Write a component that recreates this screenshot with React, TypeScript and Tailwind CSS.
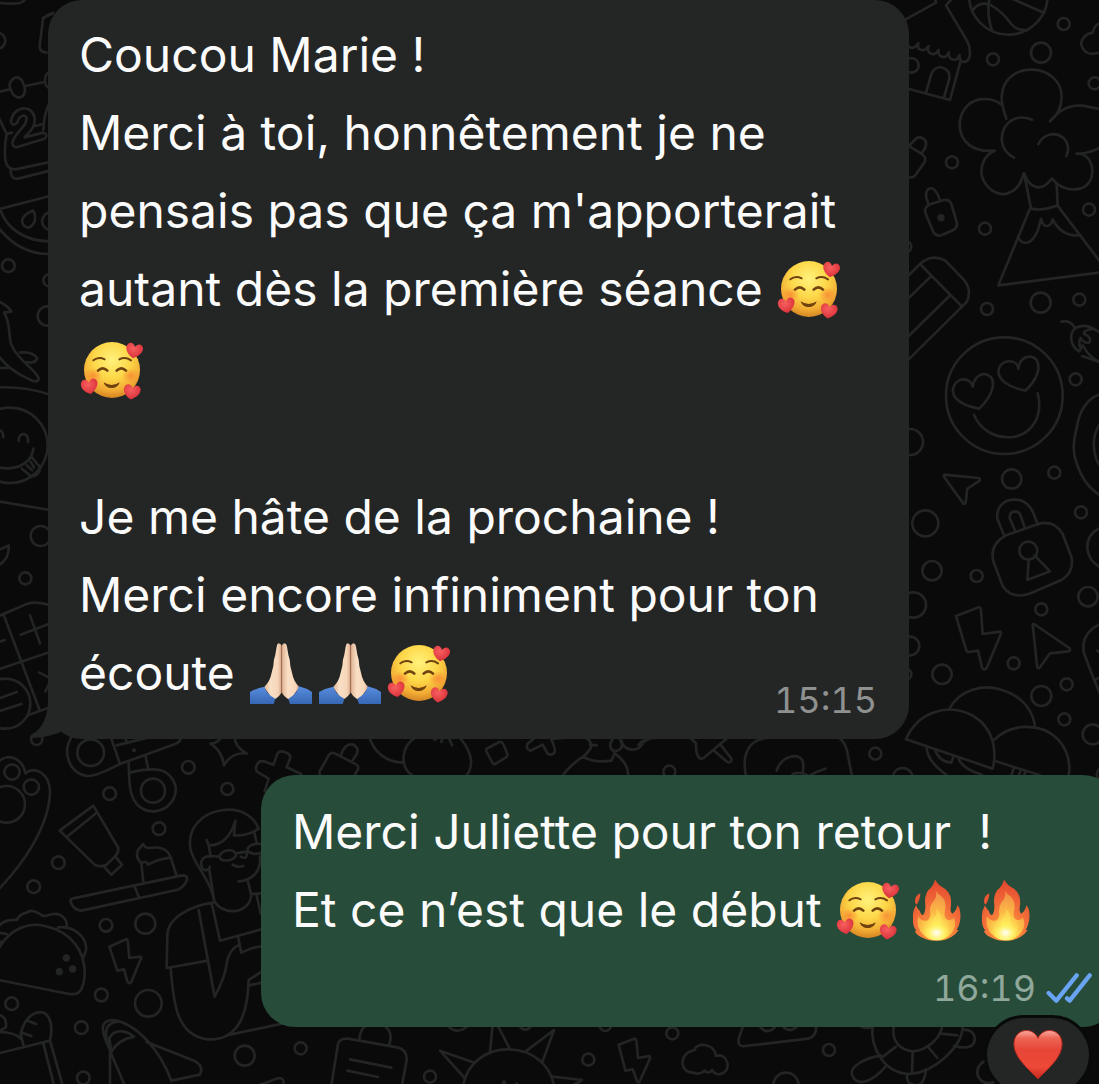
import type { ReactNode } from 'react';

type Circle = [number, number, number];

function Doodle({ at, paths, circles = [], dots = [] }: { at: string; paths: string[]; circles?: Circle[]; dots?: Circle[] }) {
  return (
    <g transform={at}>
      {paths.map((d, i) => (
        <path key={i} d={d} />
      ))}
      {circles.map(([cx, cy, r], i) => (
        <circle key={i} cx={cx} cy={cy} r={r} />
      ))}
      {dots.map(([cx, cy, r], i) => (
        <circle key={i} cx={cx} cy={cy} r={r} fill="#232424" stroke="none" />
      ))}
    </g>
  );
}

function Wallpaper() {
  return (
    <svg
      className="pointer-events-none absolute left-0 top-0"
      width="1099"
      height="1084"
      viewBox="0 0 1099 1084"
      fill="none"
      stroke="#232424"
      strokeWidth="8"
      strokeLinecap="round"
      strokeLinejoin="round"
      aria-hidden="true"
    >
      {/* shop, ball, tree, mountain, pencil, chilli */}
      <Doodle
        at="translate(900 0) scale(.33333)"
        paths={[
          'M10 62 L108 8 L104 -6',
          'M158 -6 L138 16 L202 124 Q212 142 209 168 Q205 188 188 185 Q176 182 179 165 Q170 186 152 176 Q144 170 147 157 Q138 178 121 168 Q113 162 116 150 Q104 170 88 158 Q82 152 86 138 Q72 158 56 146 Q52 140 55 130 Q40 152 24 138',
          'M24 266 L150 300 L181 186',
          'M78 278 L94 222 Q104 200 124 202 Q152 210 148 236 L132 293',
          'M216 34 Q238 0 274 16 Q306 34 334 72 Q352 94 384 90',
          'M268 -6 Q260 50 276 90',
          'M335 -4 L432 38',
          'M600 70 Q584 74 578 98 Q546 104 543 132 Q550 160 576 162 L600 158',
          'M319 356 C310 330 304 312 305 290 C308 240 345 208 396 209 C446 210 486 244 485 292 C484 324 474 346 450 364 C480 326 516 314 548 317 L604 328',
          'M305 314 C284 298 262 295 238 298 C200 306 178 340 179 378 C182 424 216 458 284 452 C250 466 240 502 246 530 C258 566 288 584 316 582 C350 574 362 552 372 519 C382 548 398 562 418 562 C436 560 446 548 456 535 C476 562 508 574 540 566 C572 556 580 528 576 502 C570 474 552 460 530 461 C560 462 582 454 604 440',
          'M396 359 C360 344 328 356 312 386 C298 420 306 454 342 473',
          'M415 432 C430 402 464 394 488 412 C506 428 508 450 499 468',
          'M372 519 L393 626 Q430 634 473 616 L470 552',
          'M389 628 L295 856 L604 817',
          'M475 620 L604 790',
          'M354 710 C364 736 390 734 406 706 C418 688 418 670 423 657 Q428 678 440 678 Q454 678 458 658 C474 690 500 710 542 706',
          'M26 438 L50 414 Q66 408 76 422 Q84 436 66 458 M30 440 L68 464 Q80 474 74 486 L46 526 Q38 534 26 532',
          'M84 608 Q70 572 90 565 Q108 562 120 602',
          'M92 612 L132 600 Q148 598 154 612 L170 666 Q174 682 160 690 L124 706 Q108 710 100 696 L76 638 Q72 620 92 612 Z',
          'M20 832 L60 792 Q96 760 136 782 L194 842 Q216 872 200 906 L186 920 L20 1084',
          'M60 792 L186 920 M92 830 L20 900 M148 888 L20 1014',
          'M484 965 Q508 958 526 984 Q508 1000 516 1028 Q524 1048 538 1054 L548 1036 Q570 1076 604 1088',
          'M526 984 Q556 970 580 986 L600 998 M580 986 Q550 990 552 1002 Q576 1010 568 1028 Q550 1030 542 1014 Q534 1028 542 1044',
        ]}
        circles={[[325, -14, 118], [491, 72, 18], [279, 178, 18], [423, 158, 30], [34, 196, 22], [584, 250, 18], [156, 487, 18], [255, 686, 18], [567, 629, 18], [422, 908, 30], [538, 899, 18], [261, 927, 18], [18, 740, 16]]}
        dots={[[123, 653, 11]]}
      />
      {/* heart-eyed face, padlock, bolts, arrows, umbrellas */}
      <Doodle
        at="translate(900 360) scale(.33333)"
        paths={[
          'M238 146 C190 138 154 116 159 86 C168 48 214 52 218 80 C224 44 252 34 272 50 C292 76 266 118 238 146 Z',
          'M376 92 C328 82 290 60 296 28 C306 -6 352 -2 355 26 C360 -10 392 -20 410 0 C428 34 396 74 376 92 Z',
          'M222 165 C242 212 288 236 338 231 C398 222 430 166 413 100',
          'M132 344 L236 354 Q244 358 236 364 L202 386 L197 428 Q194 436 188 428 L132 350 Z',
          'M313 528 L292 476 C288 440 312 420 340 419 C374 416 392 438 402 464 L414 494',
          'M346 514 L329 474 Q328 456 344 454 Q358 454 362 468 L374 502',
          'M318 526 L414 492 Q462 478 488 522 L514 590 Q524 636 484 660 L392 700 Q336 720 308 678 L280 604 Q268 552 318 526 Z',
          'M386 600 L382 660 L450 634 L404 586',
          'M168 768 L236 742 Q242 740 243 752 L248 822 L300 815 Q306 816 300 828 L260 924 Q250 934 246 922 L234 872 L206 876 Q200 878 198 868 Z',
          'M398 793 L402 792 L508 864 Q514 872 504 874 L450 880 L420 922 Q412 930 411 916 Z',
          'M604 102 C560 112 536 160 531 200 C518 250 518 280 530 310 C546 360 576 392 604 408',
          'M604 186 Q578 220 582 262 Q586 306 604 320',
          'M604 502 Q560 520 562 566 Q566 604 604 624',
          'M604 790 Q540 820 552 880 L580 954 L604 1010 M592 872 L604 878 M584 960 L604 950',
          'M150 1043 C180 990 250 970 306 990 C372 1010 402 1058 405 1104',
          'M546 -12 L604 8',
        ]}
        circles={[[313, 107, 175], [527, 58, 18], [30, 246, 39], [335, 357, 29], [463, 338, 18], [76, 490, 39], [543, 457, 18], [96, 632, 29], [230, 648, 18], [40, 735, 38], [424, 748, 18], [564, 710, 29], [385, 572, 27], [30, 858, 28], [126, 943, 29], [341, 910, 18], [424, 1008, 30], [500, 973, 18], [493, 1078, 18], [578, 1123, 30], [18, 943, 16]]}
      />
      {/* calendar, melon, dolphin */}
      <Doodle
        at="translate(0 0) scale(.33333)"
        paths={[
          'M-4 8 Q40 14 62 8 Q74 4 76 -6',
          'M160 38 Q128 48 128 66 L119 138 Q118 156 140 158 M128 54 L160 40',
          'M-4 276 L28 268 M76 258 L134 246',
          'M36 240 C46 226 62 232 68 246 C78 266 78 280 66 290 C48 298 36 282 32 268 C26 256 28 248 36 240 Z',
          'M150 214 Q128 226 138 256 L150 268',
          'M-4 352 L20 402 Q12 440 16 480 Q20 508 46 508 L150 486 M32 506 Q30 540 54 536 L150 512',
          'M20 402 L36 398 M106 378 L128 372',
          'M33 368 C34 320 94 310 103 350 C110 384 82 400 74 412 L130 398 Q146 404 134 416 L50 442 Q34 440 38 424 C50 392 82 378 80 354 C74 340 56 348 52 368 Q40 380 33 368 Z',
          'M148 310 Q132 340 130 390',
          'M-4 628 L150 588 M0 626 C20 690 80 724 150 724 M-4 684 Q60 764 150 762',
          'M66 662 Q68 644 98 632 Q108 640 104 664 Q92 690 76 680 Q68 676 66 662 Z',
          'M150 636 Q130 640 126 664 Q128 684 150 690',
          'M-4 904 Q22 916 34 934 L12 938 C34 970 24 1010 34 1034 C50 1078 106 1108 116 1134 Q114 1154 84 1136 Q24 1108 -4 1068',
          'M60 1058 Q100 1054 112 1076 Q104 1092 80 1086 M-4 1104 L28 1104 M-4 1162 Q80 1160 150 1184',
        ]}
        circles={[[-8, 122, 24], [25, 797, 19], [148, 841, 18], [142, 948, 29]]}
      />
      {/* laughing face, keypad */}
      <Doodle
        at="translate(0 400) scale(.33333)"
        paths={[
          'M-4 202 C50 214 96 188 100 146',
          'M56 122 Q56 102 72 102 Q86 106 84 126 M-4 90 Q10 92 10 112',
          'M66 206 L92 228 Q108 232 118 214 Q124 200 112 192 L94 170 M80 196 L96 210 M92 186 L102 202',
          'M-4 304 L150 330',
          'M-4 450 Q18 440 26 436 C28 464 16 484 -4 496',
          'M-4 648 L80 612 Q110 602 150 616 M10 642 L118 928 M-4 808 L150 756',
          'M90 646 L120 730 M62 704 L146 672 M-4 726 L14 720 M118 818 L150 834 M136 874 L150 846',
          'M-4 896 L50 876 M-4 934 L64 912 M84 946 L150 922',
        ]}
        circles={[[30, 136, 113], [122, 408, 30], [76, 535, 18], [16, 911, 75], [110, 1018, 17]]}
      />
      {/* whistle, tube, cake, taco, person, plane */}
      <Doodle
        at="translate(0 730) scale(.33333)"
        paths={[
          'M-4 96 C18 70 66 78 76 130 C104 108 148 128 150 184 C148 290 70 400 -4 478',
          'M215 20 C186 66 206 130 262 138 C290 140 330 116 360 102 L332 20 M350 46 L470 16 M360 102 L526 42 Q544 34 542 20 M374 20 L380 36',
          'M386 100 L388 150 C390 210 416 246 464 244 C510 240 532 200 526 166 C510 116 470 108 388 128 M436 76 L444 114',
          'M632 42 Q660 36 666 16 M632 40 Q668 66 672 106 Q694 66 740 70 Q702 50 704 16',
          'M794 184 L806 146 L776 128 Q764 122 770 106 Q776 90 792 94 L820 104 L832 72 Q838 60 854 66 Q874 72 870 86 L860 112 L904 132',
          'M179 302 L280 227 L355 354 Q356 370 342 382 L320 404 Q302 412 286 406 Z M204 318 L290 248 M314 412 L334 434 L366 404 L348 382',
          'M430 456 L424 400 Q404 380 414 360 L430 342 Q432 354 450 354 Q500 346 512 382 L530 438 M424 400 Q440 390 444 404 Q460 396 476 390 L512 382',
          'M216 506 L546 436 Q568 436 558 456 Q548 474 530 480 L244 542 Q220 540 212 516 Q210 508 216 506 Z M404 470 L416 500',
          'M-4 590 Q10 568 50 570 Q60 552 80 548 Q94 536 116 550 Q130 562 144 556 Q170 546 186 558 Q202 570 200 588',
          'M-4 656 C30 594 90 576 134 588 C220 606 256 670 254 734 C250 782 238 796 208 792 L-4 750 M174 592 C230 586 262 630 258 660 Q256 670 250 682 M-4 608 L20 612 M-4 636 L6 636',
          'M328 650 L378 628 Q384 626 384 640 L388 684 L420 680 Q428 682 420 692 L394 756 Q388 764 382 754 L372 718 L352 722 Z',
          'M776 296 C760 256 720 234 670 240 C600 248 560 300 572 360 C582 404 626 440 640 500',
          'M776 296 Q740 320 702 316 L706 272 C696 310 670 348 626 346 L620 330 M626 346 L632 378 L656 380 M762 304 L770 338',
          'M632 380 C610 374 598 396 606 412 C612 424 624 424 630 410 M628 420 L642 510 C660 554 744 560 754 496 L744 454',
          'M658 380 C666 354 710 356 708 376 C700 396 662 396 658 380 Z M708 370 L744 364 M784 342 C750 338 736 356 746 366 Q764 376 784 368',
          'M780 380 C784 430 750 452 716 454 M698 404 Q712 414 730 408 M722 380 Q742 390 740 370',
          'M640 518 C580 526 500 560 502 620 L500 714 L624 692 M596 540 L644 800 Q676 740 680 700 Q686 660 714 646 M636 524 L660 632 L784 598 M714 620 L724 668 Q760 650 784 650 M754 492 L784 490 M770 496 L782 550',
          'M512 714 C520 820 530 918 624 928 C720 934 744 840 746 750 L784 726 M748 766 L784 758 M690 914 L850 880',
          'M330 1066 L330 960 C300 900 300 870 340 870 C410 880 480 960 514 1052 L600 1034 Q612 1010 586 994 L440 936 M374 1066 L334 972 Q310 914 322 892 Q332 876 352 876 M334 966 L328 924 C346 892 384 904 402 920 Q352 930 334 966 Z',
          'M-4 970 L150 932 L188 1066 M130 940 L162 1066 M150 932 C164 870 140 840 110 848 C80 856 66 892 62 912 L70 944 M84 872 L108 882 M66 908 L94 918 M-4 906 Q44 906 62 926 M0 856 Q20 860 18 892 L4 900',
        ]}
        circles={[[36, 126, 23], [94, 171, 23], [20, 223, 55], [272, 68, 40], [459, 182, 36], [565, 112, 19], [329, 191, 19], [682, 177, 18], [477, 296, 19], [175, 398, 19], [101, 470, 19], [318, 586, 19], [436, 581, 30], [304, 795, 19], [445, 820, 40], [35, 821, 19], [244, 893, 19], [734, 977, 30], [250, 1044, 19]]}
        dots={[[199, 684, 11], [178, 725, 11], [218, 717, 11], [402, 61, 6]]}
      />
      {/* strip between the two bubbles */}
      <Doodle
        at="translate(260 730) scale(.33333)"
        paths={[
          'M180 136 L178 126 L206 76 Q214 64 228 72 L290 104 Q300 112 290 124 L284 136 M244 72 Q256 38 280 44 Q300 56 288 76 L276 94',
          'M328 20 C340 66 380 98 430 98 M470 20 C420 50 420 110 456 136 M600 24 C640 70 640 110 620 136',
          'M518 24 L526 30 M544 36 L548 24 M576 46 L568 26',
          'M684 54 L718 36 Q726 34 730 42 L742 72 Q744 78 738 82 L706 102 Q700 104 696 96 L678 62 Q678 56 684 54 Z',
          'M828 20 L802 42 Q796 58 812 62 L848 44 L862 70 Q876 80 884 66 Q888 58 872 24 M880 26 L910 24',
          'M972 20 Q1000 36 992 54 Q982 70 970 80 Q940 96 908 136 M990 44 L1010 46 M970 80 Q1000 100 1054 92 L1064 70 Q1106 100 1104 136 M1060 24 Q1040 50 1062 64 Q1090 62 1086 34 M1078 20 C1090 72 1140 66 1150 36 L1170 24',
        ]}
      />
      <Doodle
        at="translate(640 700) scale(.33333)"
        paths={[
          'M-4 134 Q16 112 46 114 M148 112 L168 130 Q166 160 178 174 Q188 180 198 168 L262 114 M220 150 L262 186 Q276 190 274 176 L240 132',
          'M318 228 C306 170 320 120 380 114 M596 112 Q620 130 624 168 L636 228 M410 212 C424 166 480 156 488 184 Q492 196 488 220 M458 222 Q480 214 500 224 M510 226 Q530 214 556 206',
          'M798 118 L1058 206 C1072 150 1060 84 1000 48 C920 4 830 40 798 118 Z',
          'M1060 122 C1110 70 1200 66 1252 116 C1284 150 1292 190 1286 228 M1068 184 L1200 226 M1114 226 L1120 208 M1136 226 L1142 212 M1152 228 L1156 216',
          'M860 142 Q860 184 924 228 M886 150 Q898 186 934 188 L940 170 M956 176 Q966 206 1026 224',
        ]}
        circles={[[706, 161, 18], [88, 215, 18], [788, 234, 30], [1392, 224, 22]]}
      />
      {/* tag, sun, bolt */}
      <Doodle
        at="translate(260 1000) scale(.33333)"
        paths={[
          'M214 256 L234 132 Q240 114 264 116 L412 142 Q442 150 440 180 L426 256 M298 118 Q300 90 316 78 M374 78 Q400 96 388 132',
          'M270 178 L394 203 M262 212 L354 231',
          'M610 256 C620 190 680 146 748 148 C820 150 870 196 882 256 M614 234 L540 152 L644 188 M690 156 L698 74 M714 78 L748 144 M800 152 L882 90 L848 184 M878 230 L966 240 L940 256',
          'M1076 134 L1122 116 Q1130 116 1130 130 L1134 174 L1168 168 Q1172 170 1168 180 L1138 246 Q1132 250 1130 240 L1118 208 L1096 212 Z',
          'M-4 256 L56 234 Q74 234 70 256',
          'M562 76 Q592 108 624 76',
        ]}
        circles={[[122, 145, 18], [510, 230, 18], [985, 179, 18], [1237, 100, 18], [796, 72, 17], [1036, 76, 17]]}
        dots={[[732, 248, 7], [770, 252, 5]]}
      />
      {/* clouds, turtle */}
      <Doodle
        at="translate(680 950) scale(.33333)"
        paths={[
          'M40 368 C0 370 -8 310 44 300 C46 278 102 276 108 318 C144 306 158 364 122 372 Q106 376 96 360 Q86 374 74 362 Q58 376 40 368 Z',
          'M190 226 L176 266 Q172 292 196 288 L384 266 Q412 258 408 226 M240 230 Q262 256 284 232 M310 230 Q328 250 350 230',
          'M578 226 C570 290 610 370 690 372 C760 368 850 290 848 226 M544 230 L560 234 L578 232',
          'M642 226 C632 270 660 302 700 304 C740 302 786 262 786 226 M606 322 L648 290 M698 308 L696 370 M742 288 L772 324 M778 250 L832 256',
          'M602 316 C550 326 510 350 516 374 C530 410 572 402 620 346 M682 372 Q676 404 708 406 Q734 404 738 358 M850 240 C880 236 894 266 876 286 Q860 298 822 288',
        ]}
        circles={[[447, 300, 18], [318, 406, 38], [926, 366, 34]]}
      />
    </svg>
  );
}

const heart = 'M0 23 C-14 17 -28 4 -25 -11 C-21 -26 -5 -25 0 -11 C6 -25 22 -24 25 -10 C26 5 11 17 0 23 Z';

function LoveFace() {
  return (
    <svg className="h-[63px] w-[69px] shrink-0" viewBox="24 20 207 189" role="img" aria-label="🥰">
      <defs>
        <radialGradient id="face" cx="50%" cy="32%" r="66%">
          <stop offset="0" stopColor="#fff27c" />
          <stop offset=".5" stopColor="#fdd748" />
          <stop offset=".82" stopColor="#f3ad35" />
          <stop offset="1" stopColor="#d98b25" />
        </radialGradient>
        <radialGradient id="blush">
          <stop offset="0" stopColor="#f98233" stopOpacity=".75" />
          <stop offset="1" stopColor="#f98233" stopOpacity="0" />
        </radialGradient>
        <radialGradient id="love" cx="42%" cy="35%" r="65%">
          <stop offset="0" stopColor="#f85f5f" />
          <stop offset="1" stopColor="#d9313a" />
        </radialGradient>
      </defs>
      <circle cx="123" cy="113" r="84" fill="url(#face)" />
      <ellipse cx="67" cy="130" rx="27" ry="22" fill="url(#blush)" />
      <ellipse cx="179" cy="130" rx="27" ry="22" fill="url(#blush)" />
      <g fill="none" stroke="#70420f" strokeLinecap="round">
        <path strokeWidth="6" d="M67 84 Q82 72 101 81 M145 81 Q163 72 180 84" />
        <path strokeWidth="8" d="M81 115 Q95 101 109 115 M137 115 Q151 101 165 115" />
      </g>
      <path d="M98 150 Q122 166 146 150 C141 173 103 173 98 150 Z" fill="#70420f" />
      <path d={heart} transform="translate(190 55) rotate(10)" fill="url(#love)" />
      <path d={heart} transform="translate(56 162) rotate(-10)" fill="url(#love)" />
      <path d={heart} transform="translate(183 179) rotate(8)" fill="url(#love)" />
    </svg>
  );
}

function PrayingHands() {
  return (
    <svg className="h-[63px] w-[69px] shrink-0" viewBox="30 32 207 189" role="img" aria-label="🙏🏻">
      <defs>
        <linearGradient id="sleeve" x1="0" x2="0" y1="0" y2="1">
          <stop offset="0" stopColor="#5b8ddf" />
          <stop offset="1" stopColor="#3567b4" />
        </linearGradient>
        <linearGradient id="skin" x1="0" x2="1">
          <stop offset="0" stopColor="#dfb192" />
          <stop offset=".35" stopColor="#fae0c6" />
          <stop offset=".8" stopColor="#f6d5b8" />
          <stop offset="1" stopColor="#d6a183" />
        </linearGradient>
      </defs>
      <path d="M131 44 Q128 36 122 36 Q117 37 116 46 L112 70 Q106 86 106 104 L100 128 Q97 148 78 168 L106 206 Q126 196 131 182 Z" fill="url(#skin)" />
      <path d="M131 44 Q134 36 140 36 Q146 37 147 46 L151 70 Q157 86 157 104 L163 128 Q166 148 184 168 L156 206 Q136 196 131 182 Z" fill="url(#skin)" />
      <path d="M36 218 L36 182 Q56 170 80 166 Q84 188 112 202 L107 218 Z M222 218 L222 182 Q204 170 182 165 Q178 188 151 202 L156 218 Z" fill="url(#sleeve)" />
      <path d="M131 42 L131 184" stroke="#a06d50" strokeWidth="3" />
    </svg>
  );
}

function Fire() {
  return (
    <svg className="h-[63px] w-[69px] shrink-0" viewBox="243 37 207 189" role="img" aria-label="🔥">
      <defs>
        <radialGradient id="flame" cx="50%" cy="88%" r="85%">
          <stop offset="0" stopColor="#fbb13c" />
          <stop offset=".5" stopColor="#f5733a" />
          <stop offset="1" stopColor="#e2472e" />
        </radialGradient>
        <radialGradient id="ember" cx="50%" cy="88%" r="90%">
          <stop offset="0" stopColor="#fffce0" />
          <stop offset=".2" stopColor="#fff05e" />
          <stop offset=".5" stopColor="#fbb945" />
          <stop offset="1" stopColor="#f08a48" />
        </radialGradient>
        <radialGradient id="glow">
          <stop offset="0" stopColor="#ffffff" />
          <stop offset="1" stopColor="#fff36a" stopOpacity="0" />
        </radialGradient>
      </defs>
      <path d="M292 80 Q274 88 276 108 L281 114 Q292 98 292 80 Z" fill="#ec5433" />
      <path d="M336 38 Q333 58 316 70 Q303 88 307 116 Q308 136 300 146 Q292 142 290 132 Q282 126 279 116 Q268 134 270 156 Q268 176 280 193 L275 193 Q282 207 294 211 Q314 223 340 222 Q366 223 386 210 Q400 202 407 190 L401 190 Q415 166 412 138 Q410 122 403 116 Q401 132 388 141 Q380 136 384 116 Q388 84 366 66 Q344 56 336 38 Z" fill="url(#flame)" />
      <path d="M338 72 Q344 92 329 106 Q318 122 322 144 Q320 164 304 162 Q291 160 285 148 Q278 182 300 203 Q317 221 341 221 Q366 221 383 203 Q404 180 393 153 Q384 163 373 159 Q361 152 366 132 Q373 104 354 88 Q345 82 338 72 Z" fill="url(#ember)" />
      <path d="M340 124 Q344 144 332 156 Q324 169 326 184 Q317 190 308 181 Q299 209 340 220 Q381 210 374 179 Q367 187 359 182 Q352 174 356 158 Q357 142 340 124 Z" fill="#fff15c" opacity=".4" />
      <ellipse cx="341" cy="198" rx="34" ry="24" fill="url(#glow)" />
    </svg>
  );
}

function RedHeart() {
  return (
    <svg className="h-[50px] w-[50px]" viewBox="998 240 150 150" role="img" aria-label="❤️">
      <defs>
        <linearGradient id="red-heart" x1="0" x2="0" y1="0" y2="1">
          <stop offset="0" stopColor="#f9aca0" />
          <stop offset=".16" stopColor="#ee6454" />
          <stop offset=".4" stopColor="#e64537" />
          <stop offset=".75" stopColor="#ee4938" />
          <stop offset="1" stopColor="#c8281d" />
        </linearGradient>
      </defs>
      <path
        d="M1073 387 C1050 361 1000 325 1001 280 C1003 235 1058 229 1073 265 C1088 229 1143 235 1145 280 C1146 325 1096 361 1073 387 Z"
        fill="url(#red-heart)"
        stroke="#bd2a20"
        strokeWidth="3"
      />
    </svg>
  );
}

function ReadTicks() {
  return (
    <svg className="h-[32px] w-[46px]" viewBox="1099 60 138 96" fill="none" stroke="#69a4f3" strokeWidth="13" strokeLinecap="round" strokeLinejoin="round" role="img" aria-label="Lu">
      <path d="M1107 123 L1130 146 L1191 70 M1162 139 L1170 146 L1230 70" />
    </svg>
  );
}

function Line({ children }: { children: ReactNode }) {
  return <p className="flex h-[78px] items-center whitespace-pre">{children}</p>;
}

export default function App() {
  return (
    <main className="relative min-h-screen overflow-hidden bg-[#0a0a0a] font-['Inter',sans-serif] text-[48px] text-[#fbfbfb]">
      <Wallpaper />
      <div className="relative flex flex-col gap-9">
        <article className="relative ml-12 mr-[190px] rounded-[34px] bg-[#242625] pb-[27px] pl-[31px] pr-8 pt-4">
          <svg className="absolute -left-[18px] bottom-0 h-10 w-9" viewBox="0 0 36 40" fill="#242625" aria-hidden="true">
            <path d="M18 0 C18 17 13 30 1 36 Q-1 39 3 39 Q20 38 33 32 L36 0 Z" />
          </svg>
          <Line>Coucou Marie !</Line>
          <Line>Merci à toi, honnêtement je ne</Line>
          <Line>pensais pas que ça m'apporterait</Line>
          <Line>
            autant dès la première séance <LoveFace />
          </Line>
          <p className="flex h-[84px] items-center">
            <LoveFace />
          </p>
          <div className="mt-[66px]">
            <Line>Je me hâte de la prochaine !</Line>
            <Line>Merci encore infiniment pour ton</Line>
            <div className="flex items-end justify-between">
              <Line>
                écoute <PrayingHands />
                <PrayingHands />
                <LoveFace />
              </Line>
              <time className="-mb-2 text-[36px] tabular-nums leading-10 text-[#8f9190]">15:15</time>
            </div>
          </div>
        </article>

        <article className="relative -mr-[18px] ml-[261px] rounded-[34px] bg-[#274c39] pl-[31px] pr-[25px] pt-[18px]">
          <Line>Merci Juliette pour ton retour  !</Line>
          <Line>
            Et ce n’est que le début <LoveFace />
            <Fire />
            <Fire />
          </Line>
          <div className="flex h-[78px] items-center justify-end gap-[10px]">
            <time className="text-[36px] tabular-nums text-[#8fa89b]">16:19</time>
            <ReadTicks />
          </div>
          <button
            type="button"
            aria-label="Réaction ❤️"
            className="absolute -bottom-[68px] right-[25px] flex h-20 w-[108px] items-start justify-center rounded-[40px] border-[3px] border-[#080909] bg-[#242625] pt-3"
          >
            <RedHeart />
          </button>
        </article>
      </div>
    </main>
  );
}
